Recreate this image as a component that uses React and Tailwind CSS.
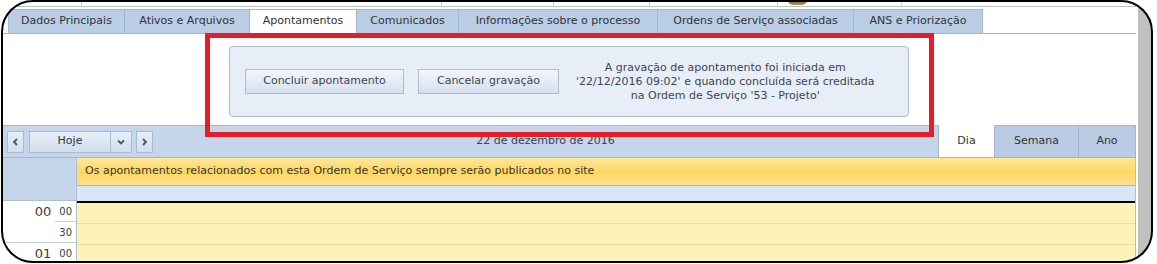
import React from 'react';

const tabs = [
    { label: 'Dados Principais', w: 'w-[117px]' },
    { label: 'Ativos e Arquivos', w: 'w-[125px]' },
    { label: 'Apontamentos', w: 'w-[107px]', active: true },
    { label: 'Comunicados', w: 'w-[102px]' },
    { label: 'Informações sobre o processo', w: 'w-[199px]' },
    { label: 'Ordens de Serviço associadas', w: 'w-[196px]' },
    { label: 'ANS e Priorização', w: 'w-[129px]' },
];

// little chevrons used on the calendar toolbar buttons
const Chevron = ({ dir }) => {
    const d = {
        left: 'M5 1 L2 4 L5 7',
        right: 'M2 1 L5 4 L2 7',
        down: 'M1 2.5 L4 5.5 L7 2.5',
    }[dir];
    return (
        <svg width="8" height="8" viewBox="0 0 8 8">
            <path d={d} fill="none" stroke="#4a5566" strokeWidth="1.8" />
        </svg>
    );
};

const HourBlock = ({ hour }) => (
    <div className="flex h-[42px] shrink-0 border-b border-[#c3cfdc]">
        <div className="w-[56px] pr-[4px] pt-[2px] text-right text-[13px] leading-[17px] text-[#3a3a3a]">
            {hour}
        </div>
        <div className="flex w-[21px] flex-col">
            <div className="flex h-[21px] shrink-0 items-center justify-center border-b border-[#c3cfdc] text-[10px] text-[#3a3a3a]">
                00
            </div>
            <div className="flex h-[21px] shrink-0 items-center justify-center text-[10px] text-[#3a3a3a]">
                30
            </div>
        </div>
    </div>
);

const App = () => {
    return (
        <div className="relative h-[264px] w-[1157px] overflow-hidden bg-white font-['DejaVu_Sans',sans-serif] text-[11px] text-[#333]">
            <div className="flex h-full">
                <div className="flex w-[1136px] flex-col">
                    {/* leftover strip from the row above */}
                    <div className="relative flex h-[7px] shrink-0 border-b border-[#b9c4d0]">
                        <div className="w-[82px] border-r border-[#c8d0da]" />
                        <div className="w-[360px] border-r border-[#c8d0da]" />
                        <div className="w-[112px] border-r border-[#c8d0da]" />
                        <div className="w-[96px] border-r border-[#c8d0da]" />
                        <div className="w-[128px] border-r border-[#c8d0da]" />
                        <div className="w-[124px] border-r border-[#c8d0da]" />
                        <div className="absolute left-[788px] top-0 h-[5px] w-[19px] rounded-b-[6px] bg-gradient-to-b from-[#6b5a1e] to-[#b39a4a]" />
                    </div>

                    {/* tab bar */}
                    <div className="mt-[2px] flex h-[25px] shrink-0">
                        <div className="w-[8px] border-b border-[#a3b5cc]" />
                        {tabs.map((t, i) => (
                            <div
                                key={t.label}
                                className={`${t.w} flex items-center justify-center border-r border-t border-[#a3b5cc] ${
                                    i === 0 ? 'border-l' : ''
                                } ${t.active ? 'border-b border-b-white bg-white' : 'border-b bg-[#b9cde4]'}`}
                            >
                                {t.label}
                            </div>
                        ))}
                        <div className="flex-1 border-b border-[#a3b5cc]" />
                    </div>

                    {/* recording panel */}
                    <div className="h-[91px] shrink-0 pl-[229px] pt-[12px]">
                        <div className="flex h-[71px] w-[680px] items-center rounded-[4px] border border-[#aebdd0] bg-[#e8eef8] pl-[15px]">
                            <button className="h-[25px] w-[159px] border border-[#adbccf] bg-gradient-to-b from-[#f3f6fb] to-[#d6e0ee] text-[#3c4452]">
                                Concluir apontamento
                            </button>
                            <button className="ml-[14px] h-[25px] w-[141px] border border-[#adbccf] bg-gradient-to-b from-[#f3f6fb] to-[#d6e0ee] text-[#3c4452]">
                                Cancelar gravação
                            </button>
                            <p className="ml-[17px] text-center leading-[14px] text-[#3c4452]">
                                A gravação de apontamento foi iniciada em
                                <br />
                                '22/12/2016 09:02' e quando concluída será creditada
                                <br />
                                na Ordem de Serviço '53 - Projeto'
                            </p>
                        </div>
                    </div>

                    {/* calendar toolbar */}
                    <div className="flex h-[32px] shrink-0 items-stretch border-t border-[#a8bad0] bg-[#c5d6ea]">
                        <div className="flex items-center pl-[7px]">
                            <button className="flex h-[22px] w-[17px] items-center justify-center border border-[#a9bcd3] bg-gradient-to-b from-[#e6edf6] to-[#d2deed]">
                                <Chevron dir="left" />
                            </button>
                            <button className="ml-[5px] h-[22px] w-[82px] border border-[#a9bcd3] bg-gradient-to-b from-[#e6edf6] to-[#d2deed] text-[#333]">
                                Hoje
                            </button>
                            <button className="flex h-[22px] w-[21px] items-center justify-center border border-l-0 border-[#a9bcd3] bg-gradient-to-b from-[#e6edf6] to-[#d2deed]">
                                <Chevron dir="down" />
                            </button>
                            <button className="ml-[4px] flex h-[22px] w-[17px] items-center justify-center border border-[#a9bcd3] bg-gradient-to-b from-[#e6edf6] to-[#d2deed]">
                                <Chevron dir="right" />
                            </button>
                        </div>
                        <div className="flex flex-1 items-center justify-center text-[#3a4252]">
                            22 de dezembro de 2016
                        </div>
                        <div className="-mt-px flex">
                            <div className="flex w-[56px] items-center justify-center border-l border-[#a3b5cc] bg-white">
                                Dia
                            </div>
                            <div className="flex w-[84px] items-center justify-center border-l border-t border-[#a3b5cc] bg-[#b9cce3]">
                                Semana
                            </div>
                            <div className="flex w-[58px] items-center justify-center border-x border-t border-[#a3b5cc] bg-[#b9cce3]">
                                Ano
                            </div>
                        </div>
                    </div>

                    {/* day view */}
                    <div className="flex min-h-0 flex-1 border-t border-[#a3b5cc]">
                        <div className="flex w-[77px] flex-col border-r border-[#aebfd3]">
                            <div className="h-[43px] shrink-0 border-b border-[#aebfd3] bg-[#c5d6ea]" />
                            <HourBlock hour="00" />
                            <HourBlock hour="01" />
                        </div>
                        <div className="flex flex-1 flex-col border-r border-[#aebfd3]">
                            <div className="flex h-[28px] shrink-0 items-center border-b border-[#cbb56a] bg-gradient-to-b from-[#fee89a] via-[#fcd764] to-[#fde08a] pl-[8px] text-[#3d3622]">
                                Os apontamentos relacionados com esta Ordem de Serviço sempre serão publicados no site
                            </div>
                            <div className="h-[15px] shrink-0 bg-[#d7e6f8]" />
                            <div className="flex-1 border-t-2 border-black bg-[#fff2b8]">
                                <div className="h-[21px] border-b border-[#efdc9c]" />
                                <div className="h-[21px] border-b border-[#efdc9c]" />
                                <div className="h-[21px] border-b border-[#efdc9c]" />
                            </div>
                        </div>
                    </div>
                </div>
                <div className="ml-[2px] w-[13px] bg-[#c0c0c0]" />
            </div>

            {/* rounded screenshot frame */}
            <div className="pointer-events-none absolute left-px top-0 h-[263px] w-[1152px] rounded-[32px] border-2 border-black shadow-[0_0_0_40px_white]" />

            {/* red highlight around the recording panel */}
            <div className="pointer-events-none absolute left-[205px] top-[33px] h-[104px] w-[729px] border-[5px] border-[#e31e28]" />
        </div>
    );
};

export default App;
